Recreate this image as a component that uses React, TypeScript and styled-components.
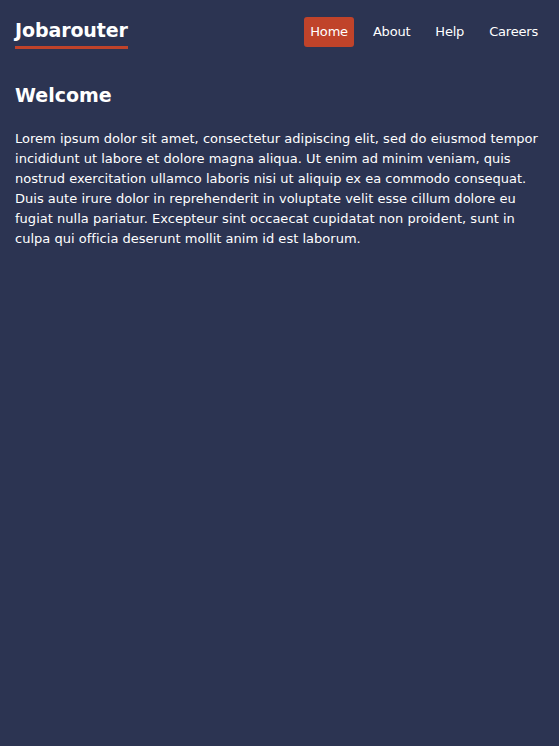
import styled, { createGlobalStyle } from 'styled-components'

const Global = createGlobalStyle`
  html, body { margin: 0; padding: 0; background: #2c3452; }
  body { font-family: "DejaVu Sans", "Noto Sans", sans-serif; color: #fff; }
`

const Page = styled.div`
  min-height: 746px;
  background: #2c3452;
  padding: 0 15px;
  box-sizing: border-box;
`

const Top = styled.header`
  display: flex; align-items: center; justify-content: space-between;
  height: 63px;
`

const Logo = styled.div`
  font-size: 19px; font-weight: 700; letter-spacing: -0.1px;
  padding-bottom: 5px; border-bottom: 3px solid #c0432a;
  margin-top: 4px;
`

const Nav = styled.nav`
  display: flex; align-items: center; gap: 4px;
`

const Link = styled.a<{ $active?: boolean }>`
  font-size: 13px; color: #fff; text-decoration: none;
  padding: 7px 6px 8px; border-radius: 3px; letter-spacing: -0.2px;
  margin-left: ${p => (p.$active ? '0' : '9px')};
  background: ${p => (p.$active ? '#c0432a' : 'transparent')};
`

const Title = styled.h1`
  margin: 21px 0 0; font-size: 19px; font-weight: 700;
`

const Text = styled.p`
  margin: 23px 0 0; font-size: 13px; line-height: 20px; letter-spacing: 0.02px;
`

export default function App() {
  return (
    <Page>
      <Global />
      <Top>
        <Logo>Jobarouter</Logo>
        <Nav>
          <Link $active href="#">Home</Link>
          <Link href="#">About</Link>
          <Link href="#">Help</Link>
          <Link href="#">Careers</Link>
        </Nav>
      </Top>
      <Title>Welcome</Title>
      <Text>
        Lorem ipsum dolor sit amet, consectetur adipiscing elit, sed do eiusmod tempor incididunt ut labore et dolore
        magna aliqua. Ut enim ad minim veniam, quis nostrud exercitation ullamco laboris nisi ut aliquip ex ea commodo
        consequat. Duis aute irure dolor in reprehenderit in voluptate velit esse cillum dolore eu fugiat nulla
        pariatur. Excepteur sint occaecat cupidatat non proident, sunt in culpa qui officia deserunt mollit anim id est
        laborum.
      </Text>
    </Page>
  )
}
